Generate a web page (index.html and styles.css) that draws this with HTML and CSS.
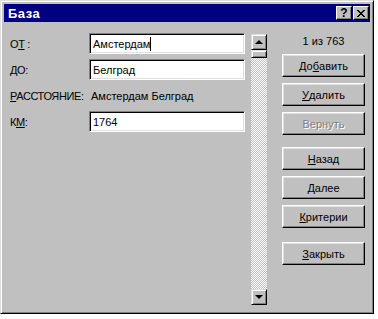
FILE: index.html
```html
<!DOCTYPE html>
<html>
<head>
	<meta charset="utf-8">
	<title>База</title>
	<link rel="stylesheet" href="styles.css">
</head>
<body>
  <div class="window">
    <div class="titlebar">
      <span class="title">База</span>
      <div class="title_buttons">
        <span class="tbtn help">?</span>
        <span class="tbtn close">
          <svg width="8" height="7" viewBox="0 0 8 7">
            <path d="M0 0h2v1h-2zM6 0h2v1h-2zM1 1h2v1h-2zM5 1h2v1h-2zM2 2h4v1h-4zM3 3h2v1h-2zM2 4h4v1h-4zM1 5h2v1h-2zM5 5h2v1h-2zM0 6h2v1h-2zM6 6h2v1h-2z" fill="#000"/>
          </svg>
        </span>
      </div>
    </div>

    <div class="content">
      <div class="fields">
        <div class="row">
          <label>О<u>Т</u> :</label>
          <div class="field">Амстердам<span class="caret"></span></div>
        </div>
        <div class="row">
          <label>ДО:</label>
          <div class="field">Белград</div>
        </div>
        <div class="row">
          <label><u>Р</u>АССТОЯНИЕ:</label>
          <span class="value">Амстердам Белград</span>
        </div>
        <div class="row">
          <label>К<u>М</u>:</label>
          <div class="field">1764</div>
        </div>
      </div>

      <div class="scrollbar">
        <div class="sbtn"><span class="arrow up"></span></div>
        <div class="thumb"></div>
        <div class="track"></div>
        <div class="sbtn"><span class="arrow down"></span></div>
      </div>

      <div class="buttons">
        <div class="counter">1 из 763</div>
        <div class="btn">До<u>б</u>авить</div>
        <div class="btn"><u>У</u>далить</div>
        <div class="btn disabled">Вернуть</div>
        <div class="btn group"><u>Н</u>азад</div>
        <div class="btn"><u>Д</u>алее</div>
        <div class="btn"><u>К</u>ритерии</div>
        <div class="btn last"><u>З</u>акрыть</div>
      </div>
    </div>
  </div>
</body>
</html>
```

FILE: styles.css
```css
body {
	margin: 0;
	background-color: #fff;
	font-family: 'Liberation Sans', Arial, sans-serif;
	font-size: 11px;
	color: #000;
}

.window {
	width: 374px;
	height: 314px;
	box-sizing: border-box;
	background-color: #c0c0c0;
	border: 1px solid;
	border-color: #dfdfdf #000 #000 #dfdfdf;
	box-shadow: inset 1px 1px #fff, inset -1px -1px #808080;
	padding: 3px;
}

.titlebar {
	height: 18px;
	background-color: #000080;
	display: flex;
	align-items: center;
	justify-content: space-between;
	padding-left: 4px;
}

.title {
	color: #fff;
	font-weight: bold;
	font-size: 13px;
	letter-spacing: 0.5px;
}

.title_buttons {
	display: flex;
	gap: 1px;
	margin-right: 1px;
}

.tbtn {
	width: 14px;
	height: 12px;
	display: flex;
	align-items: center;
	justify-content: center;
	background-color: #c0c0c0;
	border: 1px solid;
	border-color: #fff #000 #000 #fff;
	box-shadow: inset -1px -1px #808080;
	font-weight: bold;
	font-size: 12px;
	line-height: 12px;
}

.content {
	display: flex;
}

.fields {
	padding: 11px 0 0 6px;
}

.row {
	display: flex;
	align-items: center;
	height: 21px;
	margin-bottom: 5px;
}

label {
	width: 79px;
	letter-spacing: -0.4px;
}

.field {
	width: 156px;
	height: 21px;
	box-sizing: border-box;
	background-color: #fff;
	border: 1px solid;
	border-color: #808080 #fff #fff #808080;
	box-shadow: inset 1px 1px #000, inset -1px -1px #dfdfdf;
	padding: 3px 3px 0 3px;
	line-height: 14px;
	white-space: nowrap;
}

.caret {
	display: inline-block;
	width: 1px;
	height: 14px;
	background-color: #000;
	vertical-align: -3px;
}

.value {
	padding-left: 2px;
}

.scrollbar {
	display: flex;
	flex-direction: column;
	width: 16px;
	height: 271px;
	margin: 12px 0 0 6px;
}

.sbtn, .thumb {
	width: 16px;
	height: 16px;
	box-sizing: border-box;
	background-color: #c0c0c0;
	border: 1px solid;
	border-color: #dfdfdf #000 #000 #dfdfdf;
	box-shadow: inset 1px 1px #fff, inset -1px -1px #808080;
	display: flex;
	align-items: center;
	justify-content: center;
}

.thumb {
	height: 8px;
}

.track {
	flex: 1;
	background: repeating-conic-gradient(#fff 0 25%, #c0c0c0 0 50%) 0 0 / 2px 2px;
}

.arrow {
	width: 0;
	height: 0;
	border-left: 4px solid transparent;
	border-right: 4px solid transparent;
}

.arrow.up {
	border-bottom: 4px solid #000;
}

.arrow.down {
	border-top: 4px solid #000;
}

.buttons {
	width: 83px;
	margin: 12px 0 0 15px;
	display: flex;
	flex-direction: column;
}

.counter {
	text-align: center;
	line-height: 14px;
	margin-bottom: 6px;
}

.btn {
	height: 23px;
	box-sizing: border-box;
	border: 1px solid;
	border-color: #fff #000 #000 #fff;
	box-shadow: inset -1px -1px #808080, inset 1px 1px #dfdfdf;
	display: flex;
	align-items: center;
	justify-content: center;
	margin-bottom: 6px;
}

.btn.disabled {
	color: #808080;
	text-shadow: 1px 1px #fff;
}

.btn.group {
	margin-top: 6px;
}

.btn.last {
	margin-top: 8px;
}
```
